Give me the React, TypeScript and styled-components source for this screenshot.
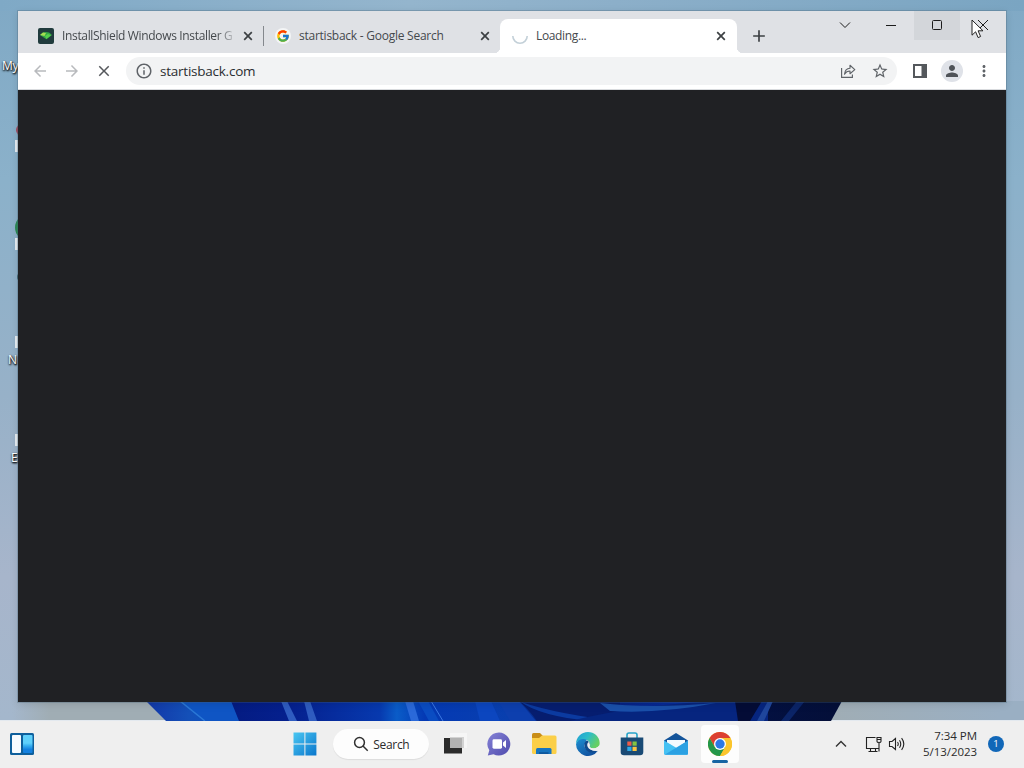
import React from 'react';
import styled, { createGlobalStyle } from 'styled-components';
import { FcGoogle } from 'react-icons/fc';
import {
    MdAdd,
    MdArrowBack,
    MdArrowForward,
    MdClose,
    MdInfoOutline,
    MdMoreVert,
    MdPerson,
    MdStarBorder,
} from 'react-icons/md';

const DesktopIcons = () => (
    <>
        <DesktopLabel $left={2} $top={58}>My</DesktopLabel>
        <DesktopLabel $left={8} $top={352}>N</DesktopLabel>
        <DesktopLabel $left={11} $top={450}>E</DesktopLabel>
        <Dot $left={16} $top={124} $size={12} $color="#a6485c" />
        <Dot $left={15} $top={214} $size={27} $color="#2c8a55" />
        <Dot $left={17} $top={273} $size={8} $color="#426a75" />
        <ShortcutMark $top={140} />
        <ShortcutMark $top={238} />
        <ShortcutMark $top={336} />
        <ShortcutMark $top={434} />
    </>
)

const Bloom = () => (
    <BloomSvg width="704" height="20" viewBox="144 701 704 20">
        <defs>
            <linearGradient id="bloom" gradientUnits="userSpaceOnUse" x1="147" x2="841" y1="0" y2="0">
                <stop offset="0" stopColor="#1238a8" />
                <stop offset="0.06" stopColor="#1450b8" />
                <stop offset="0.11" stopColor="#0a52c4" />
                <stop offset="0.335" stopColor="#0739ae" />
                <stop offset="0.36" stopColor="#0a5cc8" />
                <stop offset="0.4" stopColor="#0439b4" />
                <stop offset="0.52" stopColor="#093fae" />
                <stop offset="0.6" stopColor="#04196e" />
                <stop offset="0.8" stopColor="#0831a6" />
                <stop offset="0.88" stopColor="#031041" />
                <stop offset="1" stopColor="#040f38" />
            </linearGradient>
            <linearGradient id="petal" x1="0" x2="1" y1="0" y2="0">
                <stop offset="0" stopColor="#041b82" />
                <stop offset="0.4" stopColor="#05208e" />
                <stop offset="1" stopColor="#0739ae" />
            </linearGradient>
        </defs>
        <path d="M146 701H842L831 721H166Z" fill="url(#bloom)" />
        <path d="M180 701H240V721H206Z" fill="#0f55c4" />
        <path d="M180 701L205 721" stroke="#2b78d6" strokeWidth="1.5" fill="none" />
        <path d="M231 701H380V721H239Z" fill="url(#petal)" />
        <path d="M281 701H287L297 721H289Z" fill="#2f5cc0" />
        <path d="M304 701H310L317 721H309Z" fill="#2f5cc0" />
        <path d="M405 701H413L419 721H411Z" fill="#2a69d9" />
        <path d="M418 701H428L439 721H429Z" fill="#0a4cc2" />
        <path d="M431 701L443 721" stroke="#3b78e2" fill="none" />
        <path d="M475 701H491L500 721H480Z" fill="#0c46bf" />
        <path d="M498 701H519L536 721H510Z" fill="#0d3fae" />
        <path d="M519 701Q530 711 537 721H620V701Z" fill="#061d6f" />
        <path d="M521 702Q560 715 620 721H590Q540 716 521 702Z" fill="#0b3aa0" />
        <path d="M570 721Q640 704 720 701H768V721Z" fill="#06257f" />
        <path d="M600 703Q650 709 716 703Q660 714 610 711Z" fill="#1a50aa" />
        <path d="M735 701H762L750 721H738Z" fill="#040c36" />
        <path d="M757 721L768 701H773L764 721Z" fill="#1f469c" />
        <path d="M797 701H805L789 721H781Z" fill="#0b2467" />
    </BloomSvg>
)

const InstallShieldIcon = () => (
    <svg width="16" height="16" viewBox="0 0 16 16">
        <rect width="16" height="16" rx="2" fill="#203b3d" />
        <path d="M2 7L5 4.4Q8 3.4 11 4.4L14 7L8.4 11.2Z" fill="#35a846" />
        <path d="M2 7L5 4.6L8 5L6.5 8Z" fill="#a5dd52" />
        <path d="M7 8L10 6L13 7.2L8.4 11Z" fill="#55cf4b" />
    </svg>
)

const Spinner = () => (
    <svg width="16" height="16" viewBox="0 0 16 16">
        <path d="M.8 8A7.2 7.2 0 0 0 15.2 8" fill="none" stroke="#c3d0d8" strokeWidth="1.6" />
    </svg>
)

const Tab = ({ icon, title, spacing, active, divider, faded }: {
    icon: React.ReactNode
    title: string
    spacing: number
    active?: boolean
    divider?: boolean
    faded?: boolean
}) => (
    <TabBox $active={active} $divider={divider}>
        {icon}
        <TabTitle $spacing={spacing} $faded={faded}>{title}</TabTitle>
        <svg width="16" height="16" viewBox="0 0 16 16">
            <path d="M4.2 4.2L11.8 11.8M11.8 4.2L4.2 11.8" stroke="#3c4043" strokeWidth="1.7" />
        </svg>
    </TabBox>
)

const WindowControls = () => (
    <Controls>
        <Control>
            <svg width="12" height="12" viewBox="0 0 12 12"><path d="M1 3.5L6 8.5L11 3.5" /></svg>
        </Control>
        <Control>
            <svg width="12" height="12" viewBox="0 0 12 12"><path d="M1 6.5H11" /></svg>
        </Control>
        <Control $hover>
            <svg width="12" height="12" viewBox="0 0 12 12"><rect x="1.5" y="1.5" width="9" height="9" rx="1" /></svg>
        </Control>
        <Control>
            <svg width="12" height="12" viewBox="0 0 12 12"><path d="M1 1L11 11M11 1L1 11" /></svg>
        </Control>
    </Controls>
)

const Toolbar = () => (
    <ToolbarRow>
        <NavButtons>
            <MdArrowBack color="#b8babd" />
            <MdArrowForward color="#b8babd" />
            <MdClose color="#55585c" />
        </NavButtons>
        <Omnibox>
            <MdInfoOutline size={18} color="#5f6368" />
            <Address>startisback.com</Address>
            <svg width="16" height="16" viewBox="0 0 16 16" fill="none" stroke="#5f6368" strokeWidth="1.15">
                <path d="M1.6 5V14.4H12.4V11.5" />
                <path d="M4.5 11.2C4.8 7.4 7 5.3 10 5.2V2.3L14.8 6.6L10 10.7V8C7.5 8 5.8 9 4.5 11.2Z" strokeLinejoin="round" />
            </svg>
            <MdStarBorder size={18} color="#5f6368" />
        </Omnibox>
        <ToolbarActions>
            <svg width="16" height="16" viewBox="0 0 16 16">
                <path d="M1 1H15V15H1ZM3 3V13H9.5V3Z" fill="#54585c" fillRule="evenodd" />
            </svg>
            <Avatar><MdPerson size={18} color="#4f5358" /></Avatar>
            <MdMoreVert size={18} color="#5f6368" />
        </ToolbarActions>
    </ToolbarRow>
)

const WidgetsIcon = () => (
    <svg width="24" height="22" viewBox="0 0 24 22">
        <defs>
            <linearGradient id="widget" x1="0" x2="0" y1="0" y2="1">
                <stop offset="0.45" stopColor="#5fd0fb" />
                <stop offset="0.6" stopColor="#36aef0" />
                <stop offset="0.8" stopColor="#1481e0" />
            </linearGradient>
        </defs>
        <rect width="24" height="22" rx="1.5" fill="#0e5f9c" />
        <rect x="2" y="2" width="9" height="18" rx="1" fill="#f6fbff" />
        <rect x="13" y="2" width="9.5" height="18" rx="1" fill="url(#widget)" />
    </svg>
)

const StartIcon = () => (
    <svg width="24" height="24" viewBox="0 0 24 24">
        <defs>
            <linearGradient id="start" gradientUnits="userSpaceOnUse" x1="0" y1="0" x2="24" y2="24">
                <stop offset="0" stopColor="#4cc9f3" />
                <stop offset="1" stopColor="#0874cb" />
            </linearGradient>
        </defs>
        <path d="M.5 .5H11.4V11.4H.5ZM12.4 .5H23.4V11.4H12.4ZM.5 12.4H11.4V23.4H.5ZM12.4 12.4H23.4V23.4H12.4Z" fill="url(#start)" />
    </svg>
)

const TaskViewIcon = () => (
    <svg width="24" height="24" viewBox="0 0 24 24">
        <rect x="7" y="1" width="17" height="15" fill="#f6f6f6" />
        <rect x="1" y="6" width="18" height="15.5" fill="#2b2b2b" />
        <rect x="7" y="5" width="14" height="11" fill="#d2d2d2" />
        <rect x="7" y="6" width="12" height="10" fill="#b2b2b2" />
    </svg>
)

const ChatIcon = () => (
    <svg width="24" height="24" viewBox="0 0 24 24">
        <defs>
            <linearGradient id="chat" x1="0" x2="1" y1="0" y2="1">
                <stop offset="0" stopColor="#8582d6" />
                <stop offset="1" stopColor="#4f4bad" />
            </linearGradient>
        </defs>
        <path d="M12 .5A11.5 11.5 0 1 1 6.5 22.2L.8 23.4L2.3 18.3A11.5 11.5 0 0 1 12 .5Z" fill="url(#chat)" />
        <rect x="5.5" y="7.3" width="9.5" height="9.4" rx="1.4" fill="#fff" />
        <path d="M16 10.5L19 8V16L16 13.5Z" fill="#fff" />
    </svg>
)

const FolderIcon = () => (
    <svg width="26" height="24" viewBox="0 0 26 24">
        <path d="M1 2.5Q1 1 2.5 1H9L12 4V9H1Z" fill="#c98d17" />
        <path d="M1 6H8L11 3.5H24Q25.5 3.5 25.5 5V20.5Q25.5 22 24 22H2.5Q1 22 1 20.5Z" fill="#fbcf48" />
        <path d="M5 22V17.5Q5 16 6.5 16H19Q20.5 16 20.5 17.5V22Z" fill="#1674bf" />
        <path d="M8 22V20.2H17.5V22Z" fill="#0e579d" />
    </svg>
)

const EdgeIcon = () => (
    <svg width="24" height="24" viewBox="0 0 24 24">
        <defs>
            <linearGradient id="edgeTop" x1="0" x2="1" y1="0" y2="0.5">
                <stop offset="0" stopColor="#209bd5" />
                <stop offset="0.5" stopColor="#2cbcc9" />
                <stop offset="1" stopColor="#66cf62" />
            </linearGradient>
            <linearGradient id="edgeLow" x1="0" x2="0.7" y1="0" y2="1">
                <stop offset="0" stopColor="#1e91d3" />
                <stop offset="1" stopColor="#104f9d" />
            </linearGradient>
        </defs>
        <path d="M0 12A12 12 0 0 0 21.9 18.7C18 20.5 9 20 8.3 13.6L11.5 6L3 6Z" fill="url(#edgeLow)" />
        <path d="M8.4 13.5C8.3 10.8 9.5 9 11.5 8.6L14 11L12.8 14.5C13 17 16 19.5 21.9 18.7C17 22.5 8.8 20.5 8.4 13.5Z" fill="#104a8d" />
        <path d="M0 12C1.8 6.5 9.5 5.2 13.1 9.6C14.6 11.7 14.2 13.2 13.4 14.5C14.2 17 21 17.7 23.4 13.1C25 5.9 18.8 0 12 0C5.2 0 0 5.2 0 12Z" fill="url(#edgeTop)" />
        <path d="M13.4 14.5C14.3 12.8 14 11.2 12.6 9.9C10.5 11.5 10.8 15.2 14 17.2C17.3 19.2 20.8 19 21.9 18.7L23 16.3V14C20.5 17.1 14.8 17 13.4 14.5Z" fill="#eee" />
    </svg>
)

const StoreIcon = () => (
    <svg width="24" height="24" viewBox="0 0 24 24">
        <path d="M7 6V3Q7 1 9 1H15Q17 1 17 3V6" fill="none" stroke="#27a3c9" strokeWidth="1.6" />
        <path d="M.7 5.5H23.3V20Q23.3 23.3 20 23.3H4Q.7 23.3 .7 20Z" fill="#194a75" />
        <rect x="7.3" y="9.5" width="4.2" height="4.2" fill="#ef5c48" />
        <rect x="12.5" y="9.5" width="4.2" height="4.2" fill="#83c441" />
        <rect x="7.3" y="14.8" width="4.2" height="4.2" fill="#2da9e8" />
        <rect x="12.5" y="14.8" width="4.2" height="4.2" fill="#fac441" />
    </svg>
)

const MailIcon = () => (
    <svg width="26" height="24" viewBox="0 0 26 24">
        <path d="M1 8.5L13 1L25 8.5V13H1Z" fill="#14549a" />
        <path d="M4 8H22V11L13 16L4 11Z" fill="#f5fafe" />
        <path d="M1 8.5L25 22.8H2Q1 22.8 1 21.8Z" fill="#45c1f3" />
        <path d="M25 8.5L1.6 22.8H24Q25 22.8 25 21.8Z" fill="#2ba1e3" />
    </svg>
)

const ChromeIcon = () => (
    <svg width="24" height="24" viewBox="0 0 24 24">
        <circle cx="12" cy="12" r="12" fill="#fbc52c" />
        <path d="M12 6H22.4A12 12 0 0 0 1.6 6L6.8 15Z" fill="#dc3f31" />
        <path d="M1.6 6A12 12 0 0 0 12 24L17.2 15L6.8 15Z" fill="#24974a" />
        <path d="M17.2 15L12 24A12 12 0 0 0 22.4 6H12Z" fill="#fbc52c" />
        <circle cx="12" cy="12" r="6" fill="#fff" />
        <circle cx="12" cy="12" r="4.7" fill="#2c78e4" />
    </svg>
)

const Taskbar = () => (
    <TaskbarRow>
        <WidgetsIcon />
        <Apps>
            <AppSlot><StartIcon /></AppSlot>
            <SearchPill>
                <svg width="16" height="16" viewBox="0 0 16 16" fill="none" stroke="#303030" strokeWidth="1.5">
                    <circle cx="6.5" cy="6.5" r="4.9" />
                    <path d="M10 10L14.7 14.7" />
                </svg>
                <span>Search</span>
            </SearchPill>
            <AppSlot><TaskViewIcon /></AppSlot>
            <AppSlot><ChatIcon /></AppSlot>
            <AppSlot><FolderIcon /></AppSlot>
            <AppSlot><EdgeIcon /></AppSlot>
            <AppSlot><StoreIcon /></AppSlot>
            <AppSlot><MailIcon /></AppSlot>
            <AppSlot $active><ChromeIcon /></AppSlot>
        </Apps>
        <Tray>
            <svg width="12" height="8" viewBox="0 0 12 8" fill="none" stroke="#333" strokeWidth="1.4">
                <path d="M1 6.5L6 1.5L11 6.5" />
            </svg>
            <TrayStatus>
                <svg width="17" height="17" viewBox="0 0 17 17" fill="none" stroke="#222" strokeWidth="1.1">
                    <path d="M10.5 1.5H1.5V12.5H14M5.5 12.5V15.5M10.5 12.5V15.5M3.5 15.5H12.5" />
                    <path d="M12 1.5V5.5Q12 6.5 14 6.5T16 5.5V1.5ZM12 3.5H16M14 6.5V15.5" />
                </svg>
                <svg width="18" height="16" viewBox="0 0 18 16" fill="none" stroke="#222" strokeWidth="1.1">
                    <path d="M1.5 5.5H4L7.5 2.5V13.5L4 10.5H1.5ZM9.5 6Q11 8 9.5 10M11.5 4.2Q14 8 11.5 11.8M13.6 2.2Q18 8 13.6 13.8" />
                </svg>
            </TrayStatus>
            <Clock>
                <div>7:34 PM</div>
                <div>5/13/2023</div>
            </Clock>
            <Badge>1</Badge>
        </Tray>
    </TaskbarRow>
)

const App = () => (
    <Desktop>
        <GlobalStyle />
        <Workspace>
            <DesktopIcons />
            <Bloom />
            <BrowserWindow>
                <TabStrip>
                    <Tab icon={<InstallShieldIcon />} title="InstallShield Windows Installer G" spacing={-0.34} divider faded />
                    <Tab icon={<GoogleBadge><FcGoogle size={14} /></GoogleBadge>} title="startisback - Google Search" spacing={-0.25} />
                    <Tab icon={<Spinner />} title="Loading..." spacing={-0.36} active />
                    <NewTab><MdAdd size={20} color="#3c4043" /></NewTab>
                    <WindowControls />
                </TabStrip>
                <Toolbar />
                <Page />
            </BrowserWindow>
        </Workspace>
        <Taskbar />
        <Cursor width="14" height="20" viewBox="0 0 14 20">
            <path d="M1 1V16.2L4.6 12.8L7.1 18.6L9.6 17.5L7.1 11.8H12Z" fill="#fff" stroke="#222" strokeWidth="1" />
        </Cursor>
    </Desktop>
)

export default App

const GlobalStyle = createGlobalStyle`
    body {
        margin: 0;
        overflow: hidden;
        font-family: "Open Sans", "Noto Sans", sans-serif;
    }
    * {
        box-sizing: border-box;
    }
    svg {
        display: block;
        flex-shrink: 0;
    }
`

const Desktop = styled.div`
    position: relative;
    width: 1024px;
    height: 768px;
    display: flex;
    flex-direction: column;
    overflow: hidden;
`

const Workspace = styled.div`
    position: relative;
    flex: 1;
    background:
        linear-gradient(90deg, transparent 12px, #a0adb4 50px, #a0adb4 820px, #9aafc3 1000px) 0 701px / 100% 20px no-repeat,
        linear-gradient(90deg, #7fa9c6, #94b5cd 40%, #8cafc9 60%, #7aa5c2) 0 0 / 100% 11px no-repeat,
        linear-gradient(#80a9c5, #8bb1ca 25%, #97b1c8 55%, #a7b5cb 80%, #a4b7cc);
`

const DesktopLabel = styled.span<{ $left: number; $top: number }>`
    position: absolute;
    left: ${({ $left }) => $left}px;
    top: ${({ $top }) => $top}px;
    font-size: 12px;
    line-height: 16px;
    letter-spacing: -0.4px;
    color: #fff;
    text-shadow: 0 1px 2px #000, 1px 1px 2px #000;
`

const Dot = styled.div<{ $left: number; $top: number; $size: number; $color: string }>`
    position: absolute;
    left: ${({ $left }) => $left}px;
    top: ${({ $top }) => $top}px;
    width: ${({ $size }) => $size}px;
    height: ${({ $size }) => $size}px;
    border-radius: 50%;
    background: ${({ $color }) => $color};
`

const ShortcutMark = styled.div<{ $top: number }>`
    position: absolute;
    left: 15px;
    top: ${({ $top }) => $top}px;
    width: 12px;
    height: 12px;
    background: #e6edf2;
`

const BloomSvg = styled.svg`
    position: absolute;
    left: 144px;
    top: 701px;
`

const BrowserWindow = styled.div`
    position: absolute;
    left: 18px;
    top: 11px;
    width: 988px;
    height: 691px;
    display: flex;
    flex-direction: column;
    background: #dfe1e5;
    box-shadow: 0 0 0 1px rgba(70, 100, 120, 0.3), 0 2px 8px rgba(0, 0, 0, 0.12);
`

const TabStrip = styled.div`
    height: 42px;
    display: flex;
    padding-left: 8px;
`

const TabBox = styled.div<{ $active?: boolean; $divider?: boolean }>`
    position: relative;
    width: 237px;
    height: 34px;
    margin-top: 8px;
    padding: 0 ${({ $active }) => ($active ? 8 : 7)}px 0 12px;
    display: flex;
    align-items: center;
    gap: 8px;
    border-radius: 8px 8px 0 0;
    background: ${({ $active }) => ($active ? '#fff' : 'transparent')};

    &::before {
        content: '';
        display: ${({ $active }) => ($active ? 'block' : 'none')};
        position: absolute;
        left: -6px;
        right: -6px;
        bottom: 0;
        height: 6px;
        background:
            radial-gradient(circle at 0 0, transparent 6px, #fff 6.5px) left / 6px 6px no-repeat,
            radial-gradient(circle at 100% 0, transparent 6px, #fff 6.5px) right / 6px 6px no-repeat;
    }

    &::after {
        content: '';
        display: ${({ $divider }) => ($divider ? 'block' : 'none')};
        position: absolute;
        right: -1px;
        top: 7px;
        width: 1px;
        height: 20px;
        background: #84888d;
    }
`

const TabTitle = styled.span<{ $spacing: number; $faded?: boolean }>`
    flex: 1;
    min-width: 0;
    overflow: hidden;
    white-space: nowrap;
    font-size: 12px;
    line-height: 18px;
    letter-spacing: ${({ $spacing }) => $spacing}px;
    color: #45494d;
    ${({ $faded }) => $faded && 'mask-image: linear-gradient(90deg, #000 155px, transparent 176px);'}
`

const GoogleBadge = styled.div`
    width: 16px;
    height: 16px;
    display: grid;
    place-items: center;
    border-radius: 50%;
    background: #f4f5f6;
`

const NewTab = styled.div`
    width: 28px;
    height: 28px;
    margin: 11px 0 0 8px;
    display: grid;
    place-items: center;
`

const Controls = styled.div`
    margin-left: auto;
    display: flex;
`

const Control = styled.div<{ $hover?: boolean }>`
    width: 46px;
    height: 29px;
    padding-bottom: 1px;
    display: grid;
    place-items: center;
    background: ${({ $hover }) => ($hover ? '#d3d6da' : 'transparent')};

    svg {
        fill: none;
        stroke: #1c1c1c;
        stroke-width: 1;
    }
`

const ToolbarRow = styled.div`
    height: 37px;
    padding-left: 13px;
    display: flex;
    align-items: center;
    background: #fff;
    border-bottom: 1px solid #d9dbde;
`

const NavButtons = styled.div`
    display: flex;
    gap: 14px;
    font-size: 18px;
`

const Omnibox = styled.div`
    width: 771px;
    height: 28px;
    margin-left: 13px;
    padding: 0 8px 0 9px;
    display: flex;
    align-items: center;
    border-radius: 14px;
    background: #f2f3f4;
`

const Address = styled.span`
    flex: 1;
    margin-left: 7px;
    font-size: 13.5px;
    letter-spacing: -0.24px;
    color: #2b2e31;

    & + svg {
        margin-right: 15px;
    }
`

const ToolbarActions = styled.div`
    flex: 1;
    padding: 0 13px 0 15px;
    display: flex;
    align-items: center;
    justify-content: space-between;
`

const Avatar = styled.div`
    width: 22px;
    height: 22px;
    display: grid;
    place-items: center;
    border-radius: 50%;
    background: #dfe2e8;
`

const Page = styled.div`
    flex: 1;
    background: #202124;
`

const TaskbarRow = styled.div`
    height: 48px;
    padding: 0 20px 1px 10px;
    display: flex;
    align-items: center;
    background: #efefef;
    border-top: 1px solid #e3e9ef;
`

const Apps = styled.div`
    margin-left: 249px;
    display: flex;
    align-items: center;
`

const AppSlot = styled.div<{ $active?: boolean }>`
    position: relative;
    width: 38px;
    height: 38px;
    margin: 0 3.1px;
    display: grid;
    place-items: center;
    border-radius: 4px;
    background: ${({ $active }) => ($active ? '#fdfdfd' : 'transparent')};

    &::after {
        content: '';
        display: ${({ $active }) => ($active ? 'block' : 'none')};
        position: absolute;
        left: 11px;
        bottom: 0;
        width: 16px;
        height: 3px;
        border-radius: 2px;
        background: #1765a3;
    }
`

const SearchPill = styled.div`
    width: 96px;
    height: 30px;
    margin: 0 4px 0 6px;
    padding-left: 20px;
    display: flex;
    align-items: center;
    gap: 4px;
    border-radius: 15px;
    background: #fdfdfd;
    box-shadow: 0 1px 1px rgba(0, 0, 0, 0.08);
    font-size: 12px;
    letter-spacing: -0.3px;
    color: #2b2b2b;
`

const Tray = styled.div`
    margin-left: auto;
    display: flex;
    align-items: center;
`

const TrayStatus = styled.div`
    margin: 0 15px 0 18px;
    display: flex;
    align-items: center;
    gap: 6px;
`

const Clock = styled.div`
    width: 56px;
    text-align: right;
    white-space: nowrap;
    font-size: 11.5px;
    line-height: 16px;
    letter-spacing: -0.05px;
    color: #2c2c2c;
`

const Badge = styled.div`
    width: 16px;
    height: 16px;
    margin-left: 11px;
    display: grid;
    place-items: center;
    border-radius: 50%;
    background: #1167b8;
    color: #fff;
    font-size: 9.5px;
    line-height: 16px;
`

const Cursor = styled.svg`
    position: absolute;
    left: 971px;
    top: 19px;
`
